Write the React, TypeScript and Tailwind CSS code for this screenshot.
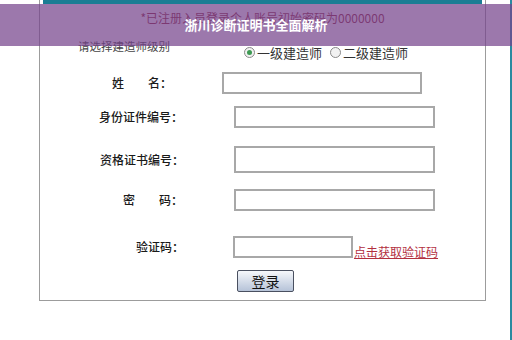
import React from "react";

const font = { fontFamily: '"Noto Sans CJK SC", "Noto Sans", sans-serif' };

function Field({
  label,
  labelLeft,
  gap,
  width,
  height,
  top,
}: {
  label: string;
  labelLeft: string;
  gap: string;
  width: string;
  height: string;
  top: string;
}) {
  return (
    <div className={`flex items-center ${top} ${height}`}>
      <span className={`${labelLeft} text-[12px] leading-[14px] font-medium text-[#1a1a1a] whitespace-pre`}>
        {label}
      </span>
      <div className={`${gap} ${width} h-full border-2 border-[#a8a8a8] bg-white`} />
    </div>
  );
}

export default function App() {
  return (
    <div
      className="relative w-[512px] h-[340px] overflow-hidden bg-white flex"
      style={font}
    >
      <div className="ml-[39px] w-[447px] h-[301px] border-l border-r border-b border-[#9c9c9c] flex flex-col">
        <div className="mx-[3px] h-[4px] bg-[#1b7d94]" />
        <p className="mt-[6px] text-center text-[12px] leading-[16px] text-[#8e1c30]">
          *已注册入员登录个人账号初始密码为0000000
        </p>

        {/* level */}
        <div className="flex mt-[14px] pl-[38px]">
          <span className="text-[11.5px] leading-[12px] text-[#444]">请选择建造师级别</span>
          <div className="flex items-center mt-[6px] ml-[74px] text-[13px] leading-[13px] text-[#333]">
            <span className="w-[11px] h-[11px] rounded-full border border-[#8a8a8a] bg-[#f2f2f2] flex items-center justify-center">
              <span className="w-[5px] h-[5px] rounded-full bg-[#3d9a52]" />
            </span>
            <span className="ml-[2px]">一级建造师</span>
            <span className="ml-[8px] w-[11px] h-[11px] rounded-full border border-[#8a8a8a] bg-[#f2f2f2]" />
            <span className="ml-[2px]">二级建造师</span>
          </div>
        </div>

        <Field label="姓　　名：" labelLeft="ml-[72px]" gap="ml-[50px]" width="w-[200px]" height="h-[22px]" top="mt-[13px]" />
        <Field label="身份证件编号：" labelLeft="ml-[59px]" gap="ml-[51px]" width="w-[201px]" height="h-[22px]" top="mt-[12px]" />
        <Field label="资格证书编号：" labelLeft="ml-[60px]" gap="ml-[50px]" width="w-[201px]" height="h-[27px]" top="mt-[18px]" />
        <Field label="密　　码：" labelLeft="ml-[83px]" gap="ml-[51px]" width="w-[201px]" height="h-[22px]" top="mt-[16px]" />

        {/* captcha */}
        <div className="flex items-center mt-[25px] h-[22px]">
          <span className="ml-[96px] text-[12px] leading-[14px] font-medium text-[#1a1a1a]">验证码：</span>
          <div className="ml-[49px] w-[120px] h-full border-2 border-[#a8a8a8] bg-white" />
          <a className="self-end mb-[-1px] ml-[1px] text-[12px] leading-[14px] text-[#b3303f] underline">
            点击获取验证码
          </a>
        </div>

        <button className="mt-[12px] ml-[197px] w-[57px] h-[22px] rounded-[2px] border border-[#4a5060] bg-gradient-to-b from-[#f6f8fb] to-[#b6c3d8] text-[14px] leading-[14px] text-[#111]">
          登录
        </button>
      </div>
      <div className="ml-[24px] w-[2px] h-full bg-[#2a8aa0]" />

      <div className="absolute left-0 right-0 top-[4px] h-[42px] bg-[rgba(118,68,140,0.72)] flex items-center justify-center">
        <span className="text-white font-bold text-[13px] leading-[16px]">
          浙川诊断证明书全面解析
        </span>
      </div>
    </div>
  );
}
